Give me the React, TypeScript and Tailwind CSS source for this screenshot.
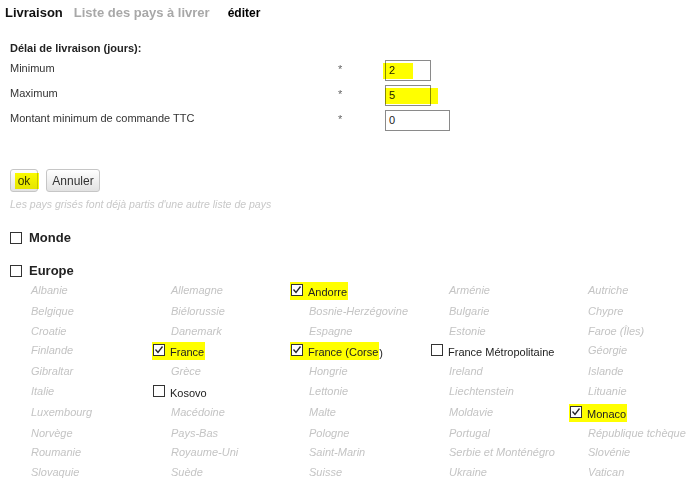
import React from 'react';

type Country = { name: string; box?: 'on' | 'off'; tail?: string };

const rows: Country[][] = [
  [{ name: 'Albanie' }, { name: 'Allemagne' }, { name: 'Andorre', box: 'on' }, { name: 'Arménie' }, { name: 'Autriche' }],
  [{ name: 'Belgique' }, { name: 'Biélorussie' }, { name: 'Bosnie-Herzégovine' }, { name: 'Bulgarie' }, { name: 'Chypre' }],
  [{ name: 'Croatie' }, { name: 'Danemark' }, { name: 'Espagne' }, { name: 'Estonie' }, { name: 'Faroe (Îles)' }],
  [
    { name: 'Finlande' },
    { name: 'France', box: 'on' },
    { name: 'France (Corse', box: 'on', tail: ')' },
    { name: 'France Métropolitaine', box: 'off' },
    { name: 'Géorgie' },
  ],
  [{ name: 'Gibraltar' }, { name: 'Grèce' }, { name: 'Hongrie' }, { name: 'Ireland' }, { name: 'Islande' }],
  [{ name: 'Italie' }, { name: 'Kosovo', box: 'off' }, { name: 'Lettonie' }, { name: 'Liechtenstein' }, { name: 'Lituanie' }],
  [{ name: 'Luxembourg' }, { name: 'Macédoine' }, { name: 'Malte' }, { name: 'Moldavie' }, { name: 'Monaco', box: 'on' }],
  [{ name: 'Norvège' }, { name: 'Pays-Bas' }, { name: 'Pologne' }, { name: 'Portugal' }, { name: 'République tchèque' }],
  [{ name: 'Roumanie' }, { name: 'Royaume-Uni' }, { name: 'Saint-Marin' }, { name: 'Serbie et Monténégro' }, { name: 'Slovénie' }],
  [{ name: 'Slovaquie' }, { name: 'Suède' }, { name: 'Suisse' }, { name: 'Ukraine' }, { name: 'Vatican' }],
];

function Box({ checked }: { checked?: boolean }) {
  return (
    <span className="flex h-[12px] w-[12px] shrink-0 items-center justify-center border border-[#333] bg-white">
      {checked && (
        <svg width="10" height="10" viewBox="0 0 10 10" fill="none">
          <path d="M1.5 4.5 L4 7.5 L8.5 1.5" stroke="#222" strokeWidth="1.3" />
        </svg>
      )}
    </span>
  );
}

function CountryCell({ c }: { c: Country }) {
  if (!c.box) {
    return <div className="h-[19.5px] italic leading-[19px] text-[#c4c4c4]">{c.name}</div>;
  }
  const on = c.box === 'on';
  return (
    <div className="ml-[-19px] flex h-[21px] items-start pt-[1px] text-[#222]">
      <span className={`flex h-[18px] items-start gap-[5px] pt-[2px] pl-[1px] pr-[1px] leading-[16px] ${on ? 'bg-[#ffff00]' : ''}`}>
        <Box checked={on} />
        <span>{c.name}</span>
      </span>
      {c.tail && <span className="pt-[3px] leading-[16px]">{c.tail}</span>}
    </div>
  );
}

function FieldRow({ label, value, width, mark }: { label: string; value: string; width: string; mark?: string }) {
  return (
    <div className="flex h-[25px] items-start">
      <div className="w-[326px] leading-[16px]">{label}</div>
      <div className="w-[49px] pl-[2px] pt-[1px] leading-[16px] text-[#666]">*</div>
      <div className={`relative h-[21px] ${width} border border-[#8a8a8a] bg-white pl-[3px] leading-[19px] text-[#222]`}>
        {value}
        {mark && <span className={`pointer-events-none absolute top-[2px] h-[16px] bg-[#ffff00] mix-blend-multiply ${mark}`} />}
      </div>
    </div>
  );
}

export default function App() {
  return (
    <div className="min-h-[500px] w-[700px] bg-white text-[11px] text-[#333]" style={{ fontFamily: '"Liberation Sans", Arial, sans-serif' }}>
      {/* Onglets */}
      <div className="flex items-end pl-[5px] pt-[5px] font-bold leading-[16px]">
        <span className="text-[13px] text-[#111]">Livraison</span>
        <span className="ml-[11px] text-[13px] text-[#a8a8a8]">Liste des pays à livrer</span>
        <span className="ml-[18px] text-[12px] text-black">éditer</span>
      </div>

      {/* Formulaire */}
      <div className="pl-[10px]">
        <div className="mt-[19px] font-bold leading-[16px] text-[#222]">Délai de livraison (jours):</div>
        <div className="mt-[4px]">
          <FieldRow label="Minimum" value="2" width="w-[46px]" mark="left-[-3px] w-[30px]" />
          <FieldRow label="Maximum" value="5" width="w-[46px]" mark="left-[-1px] w-[53px]" />
          <FieldRow label="Montant minimum de commande TTC" value="0" width="w-[65px]" />
        </div>

        <div className="mt-[34px] flex gap-[8px]">
          <button className="relative h-[23px] w-[28px] rounded-[3px] border border-[#c6c6c6] bg-gradient-to-b from-white to-[#e2e2e2] text-[12px] text-[#333]">
            ok
            <span className="pointer-events-none absolute left-[4px] top-[3px] h-[16px] w-[24px] bg-[#ffff00] mix-blend-multiply" />
          </button>
          <button className="h-[23px] w-[54px] rounded-[3px] border border-[#c6c6c6] bg-gradient-to-b from-white to-[#e2e2e2] text-[12px] text-[#333]">
            Annuler
          </button>
        </div>

        <div className="mt-[5px] text-[10.5px] italic leading-[14px] text-[#c8c8c8]">Les pays grisés font déjà partis d'une autre liste de pays</div>

        <div className="mt-[19px] flex h-[16px] items-center gap-[7px]">
          <Box />
          <span className="text-[13px] font-bold text-[#222]">Monde</span>
        </div>
        <div className="mt-[17px] flex h-[16px] items-center gap-[7px]">
          <Box />
          <span className="text-[13px] font-bold text-[#222]">Europe</span>
        </div>
      </div>

      {/* Pays */}
      <div className="mt-[2px] grid grid-cols-[140px_138px_140px_139px_1fr] pl-[31px]">
        {rows.map((row, i) => (
          <React.Fragment key={i}>
            {row.map((c) => (
              <CountryCell key={c.name} c={c} />
            ))}
          </React.Fragment>
        ))}
      </div>
    </div>
  );
}
